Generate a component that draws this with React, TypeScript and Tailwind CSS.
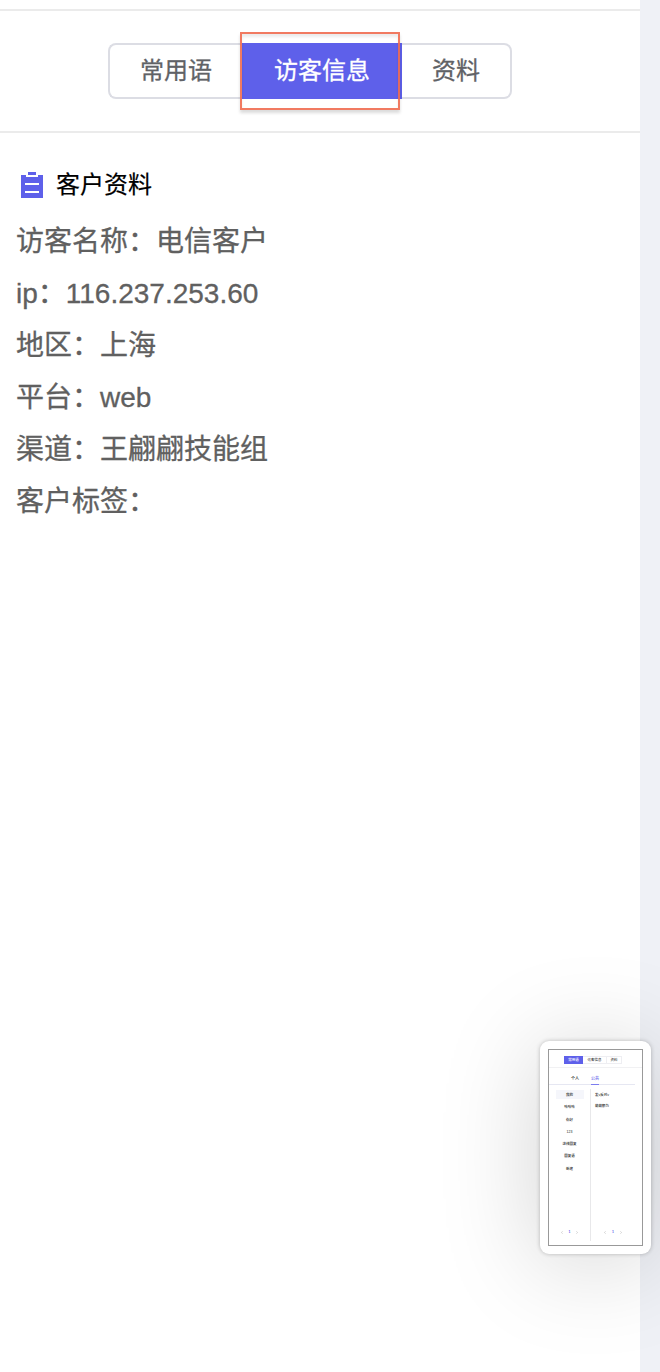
const details = [
  { label: "访客名称：", value: "电信客户" },
  { label: "ip：", value: "116.237.253.60" },
  { label: "地区：", value: "上海" },
  { label: "平台：", value: "web" },
  { label: "渠道：", value: "王翩翩技能组" },
  { label: "客户标签：", value: "" },
];

const groups = ["我的", "哈哈哈", "你好", "123", "进线回复", "回复语", "新建"];

function ClipboardIcon() {
  return (
    <svg className="mt-[7px] h-[26px] w-[22px] shrink-0" viewBox="0 0 22 26" fill="none" shapeRendering="crispEdges">
      <path d="M0 3h5v2h12V3h5v23H0z" fill="#5e60ea" />
      <path d="M7 0h8v3H7z" fill="#5e60ea" />
      <path d="M4 11h14v2H4zM4 19h14v2H4z" fill="#fff" />
    </svg>
  );
}

function Pagination() {
  return (
    <div className="flex w-[18px] items-center justify-between text-[3.5px] leading-none">
      <svg className="h-[3px] w-[2px]" viewBox="0 0 2 3" fill="none">
        <path d="M1.6.3.5 1.5l1.1 1.2" stroke="#aaa" strokeWidth=".5" />
      </svg>
      <b className="text-[#5e60ea]">1</b>
      <svg className="h-[3px] w-[2px]" viewBox="0 0 2 3" fill="none">
        <path d="M.4.3 1.5 1.5.4 2.7" stroke="#aaa" strokeWidth=".5" />
      </svg>
    </div>
  );
}

function Thumbnail() {
  return (
    <div className="absolute top-[1041px] left-[540px] h-[213px] w-[111px] rounded-[9px] bg-white p-2 shadow-[0_0_4px_rgba(0,0,0,0.24),0_8px_100px_rgba(0,0,0,0.18)]">
      <div className="flex h-[197px] w-[95px] flex-col overflow-hidden border border-[#999] bg-white text-[#222]">
        <div className="flex h-[18px] shrink-0 border-b border-[#f1f1f3] pt-[6px] pl-[15px] text-[3.5px] leading-[8px]">
          <div className="h-[8px] w-[19px] bg-[#5e60ea] text-center font-medium text-white">常用语</div>
          <div className="h-[8px] w-[23px] border-y border-[#eeeef2] text-center leading-[6px]">访客信息</div>
          <div className="h-[8px] w-[16px] border border-[#eeeef2] text-center leading-[6px]">资料</div>
        </div>
        <div className="mr-[7px] flex h-[17px] shrink-0 items-end border-b border-[#e6e7f2] pl-[22px] text-[4px] leading-[10px] font-medium">
          <div className="w-[8px] text-center">个人</div>
          <div className="-mb-px ml-[12px] h-[11px] w-[8px] border-b border-[#7c7df0] text-center text-[#5e60ea]">公共</div>
        </div>
        <div className="mt-[4px] flex h-[152px] text-[3.5px] font-medium">
          <div className="flex w-[42px] flex-col items-center border-r border-[#e8e8ea] pt-px">
            {groups.map((group, index) => (
              <div key={group} className="h-[12.25px] shrink-0">
                <div className={index === 0 ? "h-[9px] w-[28px] bg-[#f5f6fb] text-center leading-[10px]" : "h-[9px] w-[28px] text-center leading-[10px]"}>
                  {group}
                </div>
              </div>
            ))}
            <div className="mt-auto mb-[7px]"><Pagination /></div>
          </div>
          <div className="flex flex-1 flex-col pt-px pl-[4px]">
            <div className="h-[11px] leading-[10px]">发v反对v</div>
            <div className="h-[11px] leading-[10px]">萌萌额为</div>
            <div className="mt-auto mb-[7px] ml-[9px]"><Pagination /></div>
          </div>
        </div>
      </div>
    </div>
  );
}

export default function App() {
  return (
    <div className="relative flex h-[1372px] w-[660px] overflow-hidden bg-[#eff1f6] font-['Liberation_Sans','Noto_Sans_CJK_SC',sans-serif]">
      <main className="flex w-[640px] flex-col bg-white pt-[9px]">
        <nav className="flex h-[124px] justify-center border-y-2 border-[#ebebeb] pt-8 pr-5 text-2xl text-[#606266] [-webkit-text-stroke:0.3px]">
          <div className="relative flex h-14 leading-[52px]">
            <button className="h-14 w-[134px] rounded-l-lg border-2 border-r-0 border-[#dcdde4]">常用语</button>
            <button className="h-14 w-[160px] bg-[#5e60ea] text-white">访客信息</button>
            <button className="h-14 w-[110px] rounded-r-lg border-2 border-l-0 border-[#dcdde4]">资料</button>
            <div className="pointer-events-none absolute -top-[11px] left-[132px] h-[78px] w-[160px] border-2 border-[#ef6b50]/90 shadow-[0_3px_3px_rgba(0,0,0,0.14),inset_0_3px_3px_rgba(0,0,0,0.08)]" />
          </div>
        </nav>
        <section>
          <h2 className="mt-8 flex h-[51px] gap-[13px] pl-[21px] text-2xl leading-[40px] text-black [-webkit-text-stroke:0.2px]">
            <ClipboardIcon />
            客户资料
          </h2>
          <dl className="pl-4 text-[28px] leading-[52px] text-[#606060] [-webkit-text-stroke:0.3px]">
            {details.map(({ label, value }) => (
              <div key={label} className="flex h-[52px]">
                <dt>{label}</dt>
                <dd>{value}</dd>
              </div>
            ))}
          </dl>
        </section>
      </main>
      <Thumbnail />
    </div>
  );
}
